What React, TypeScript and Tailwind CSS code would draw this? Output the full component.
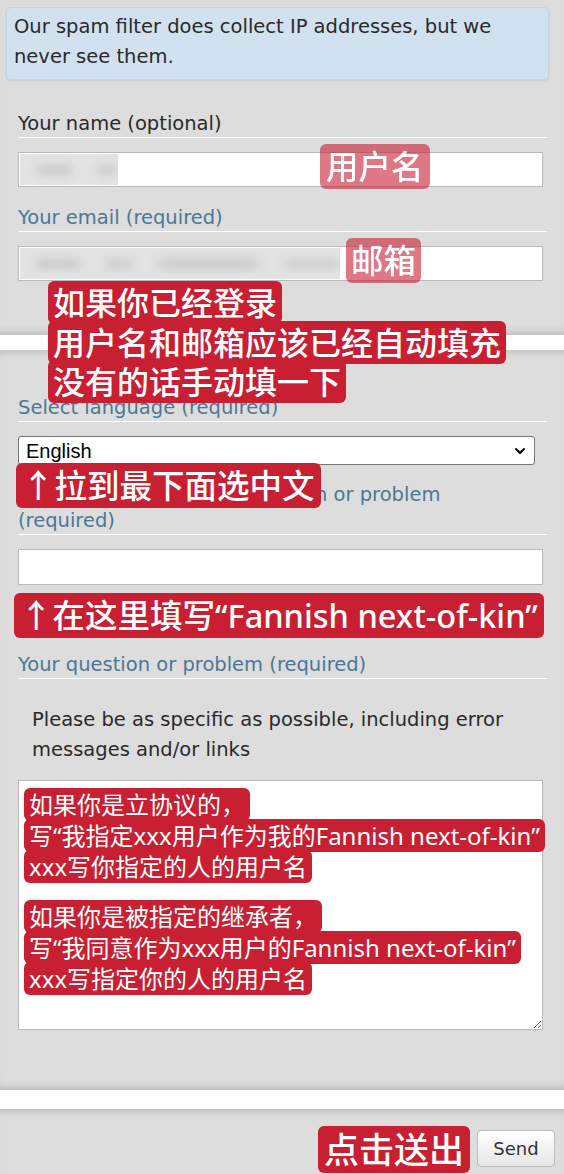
import { ChevronDown } from 'lucide-react';

const tag =
  "box-decoration-clone bg-[#c81f33] text-white rounded-[6px] font-['Noto_Sans','Noto_Sans_CJK_SC',sans-serif] font-medium";

function Label({ text, blue, wrap }: { text: string; blue?: boolean; wrap?: string }) {
  return (
    <div
      className={`border-b border-white leading-[26px] text-[19.5px] ${
        blue ? 'text-[#4b7897]' : 'text-[#2a2a2a]'
      }`}
    >
      <div className={wrap}>{text}</div>
    </div>
  );
}

function Redacted({ width }: { width: number }) {
  // blurred-out autofill value
  return (
    <div className="h-full bg-[#e3e3e3] overflow-hidden flex items-center gap-6 pl-4" style={{ width }}>
      <div className="h-[10px] w-[48px] rounded-full bg-[#c9c9c9] blur-[4px]" />
      <div className="h-[10px] w-[30px] rounded-full bg-[#cdcdcd] blur-[4px]" />
      {width > 200 && <div className="h-[10px] w-[110px] rounded-full bg-[#cbcbcb] blur-[5px]" />}
      {width > 200 && <div className="h-[10px] w-[60px] rounded-full bg-[#cecece] blur-[5px]" />}
    </div>
  );
}

export default function App() {
  return (
    <div className="relative w-[564px] min-h-[1174px] bg-[#dddddd] font-['DejaVu_Sans',sans-serif] overflow-hidden">
      {/* part 1 */}
      <div className="h-[335px] pt-[7px] shadow-[inset_0_-9px_8px_-7px_rgba(0,0,0,0.18)]">
        <div className="ml-[6px] mr-[15px] rounded-[5px] border border-[#c3d3e2] bg-[#d1e1ef] px-[7px] pt-[4px] pb-[7px] text-[19.5px] leading-[30px] text-[#2a2a2a] shadow-[0_1px_2px_rgba(0,0,0,0.08)]">
          Our spam filter does collect IP addresses, but we never see them.
        </div>
        <div className="ml-[18px] mr-[17px] mt-[31px]">
          <Label text="Your name (optional)" />
          <div className="mt-[14px] mr-[4px] h-[35px] border border-[#b9b9b9] bg-white p-[1px]">
            <Redacted width={98} />
          </div>
          <div className="mt-[18px]">
            <Label text="Your email (required)" blue />
          </div>
          <div className="mt-[14px] mr-[4px] h-[35px] border border-[#b9b9b9] bg-white p-[1px]">
            <Redacted width={320} />
          </div>
        </div>
      </div>

      <div className="h-[15px] bg-white" />

      {/* part 2 */}
      <div className="h-[740px] pt-[45px] shadow-[inset_0_9px_8px_-7px_rgba(0,0,0,0.15),inset_0_-9px_8px_-7px_rgba(0,0,0,0.18)]">
        <div className="ml-[18px] mr-[17px]">
          <Label text="Select language (required)" blue />
          <div className="mt-[14px] mr-[12px] h-[29px] flex items-center justify-between rounded-[3px] border border-[#767676] bg-white pl-[7px] pr-[6px] font-['Liberation_Sans',sans-serif] text-[20px] text-black">
            <span>English</span>
            <ChevronDown className="w-[16px] h-[16px]" strokeWidth={3} />
          </div>
          <div className="mt-[17px]">
            <Label text="Brief summary of your question or problem (required)" blue wrap="pr-[80px]" />
          </div>
          <div className="mt-[14px] mr-[4px] h-[36px] border border-[#b9b9b9] bg-white" />
          <div className="mt-[67px]">
            <Label text="Your question or problem (required)" blue />
          </div>
          <p className="mt-[26px] pl-[14px] text-[19.5px] leading-[30px] text-[#2a2a2a]">
            Please be as specific as possible, including error messages and/or links
          </p>
          <textarea
            aria-label="Your question or problem"
            className="mt-[15px] mr-[4px] block w-[525px] h-[250px] border border-[#b9b9b9] bg-white resize"
          />
        </div>
      </div>

      <div className="h-[19px] bg-white" />

      {/* part 3 */}
      <div className="h-[65px] pt-[21px] pr-[9px] flex justify-end items-start shadow-[inset_0_9px_8px_-7px_rgba(0,0,0,0.15)]">
        <button className="h-[37px] w-[78px] rounded-[4px] border border-[#bdbdbd] bg-gradient-to-b from-white to-[#e6e6e6] text-[18px] text-[#333]">
          Send
        </button>
      </div>

      {/* annotations */}
      <div className="absolute left-[320px] top-[147px] text-[32.5px] leading-[39px] opacity-60">
        <span className={`${tag} px-[6px]`}>用户名</span>
      </div>
      <div className="absolute left-[346px] top-[241px] text-[32.5px] leading-[40px] opacity-60">
        <span className={`${tag} px-[5px]`}>邮箱</span>
      </div>
      <div className="absolute left-[48px] top-[284px] text-[32px] leading-[37.5px] whitespace-nowrap">
        <span className={`${tag} px-[5px]`}>
          如果你已经登录
          <br />
          用户名和邮箱应该已经自动填充
          <br />
          没有的话手动填一下
        </span>
      </div>
      <div className="absolute left-[16px] top-[466px] text-[32.5px] leading-[40px] whitespace-nowrap">
        <span className={`${tag} px-[6px]`}>↑拉到最下面选中文</span>
      </div>
      <div className="absolute left-[14px] top-[596px] text-[32.5px] leading-[40px] whitespace-nowrap">
        <span className={`${tag} px-[6px]`}>↑在这里填写“Fannish next-of-kin”</span>
      </div>
      <div className="absolute left-[24px] top-[790px] text-[24px] leading-[29px] whitespace-nowrap">
        <span className={`${tag} font-normal px-[5px]`}>
          如果你是立协议的，
          <br />
          写“我指定xxx用户作为我的Fannish next-of-kin”
          <br />
          xxx写你指定的人的用户名
        </span>
      </div>
      <div className="absolute left-[24px] top-[902px] text-[24px] leading-[29px] whitespace-nowrap">
        <span className={`${tag} font-normal px-[5px]`}>
          如果你是被指定的继承者，
          <br />
          写“我同意作为xxx用户的Fannish next-of-kin”
          <br />
          xxx写指定你的人的用户名
        </span>
      </div>
      <div className="absolute left-[318px] top-[1128px] text-[35px] leading-[44px] whitespace-nowrap">
        <span className={`${tag} px-[6px]`}>点击送出</span>
      </div>
    </div>
  );
}
